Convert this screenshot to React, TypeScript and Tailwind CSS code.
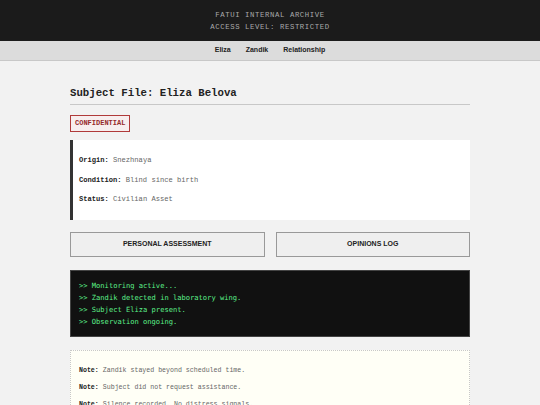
const mono = "font-['Liberation_Mono','Courier_New',monospace]"

function InfoRow({ label, value }: { label: string; value: string }) {
  return (
    <p className="leading-[10px]">
      <span className="font-bold text-[#222]">{label}:</span>{' '}
      <span className="text-[#666]">{value}</span>
    </p>
  )
}

export default function App() {
  const log = [
    '>> Monitoring active...',
    '>> Zandik detected in laboratory wing.',
    '>> Subject Eliza present.',
    '>> Observation ongoing.',
  ]
  const notes = [
    'Zandik stayed beyond scheduled time.',
    'Subject did not request assistance.',
    'Silence recorded. No distress signals.',
  ]

  return (
    <div className="h-[405px] overflow-hidden bg-[#f2f2f2]">
      <header className={`h-[41px] bg-[#1b1b1b] pt-[9px] text-center text-[7.3px] leading-[12px] tracking-[0.6px] text-[#aaa] ${mono}`}>
        <div>FATUI INTERNAL ARCHIVE</div>
        <div>ACCESS LEVEL: RESTRICTED</div>
      </header>

      <nav className="flex h-[20px] items-center justify-center gap-[15px] border-b border-[#c8c8c8] bg-[#dcdcdc] font-['Liberation_Sans',Arial,sans-serif] text-[7px] font-bold text-[#222]">
        <span>Eliza</span>
        <span>Zandik</span>
        <span>Relationship</span>
      </nav>

      <main className={`mx-auto w-[400px] pt-[25px] ${mono}`}>
        <h1 className="border-b border-[#c8c8c8] pb-[4px] text-[10.7px] font-bold leading-[14px] text-[#222]">
          Subject File: Eliza Belova
        </h1>

        <div className="mt-[10px] flex h-[17px] w-fit items-center border-[1.5px] border-[#b03a3a] bg-[#f7eeee] px-[4px] text-[7px] font-bold text-[#962a2a]">
          CONFIDENTIAL
        </div>

        <section className="mt-[8px] flex h-[80px] flex-col gap-[9.5px] border-l-[3px] border-[#333] bg-white pl-[6px] pt-[15px] text-[7.1px]">
          <InfoRow label="Origin" value="Snezhnaya" />
          <InfoRow label="Condition" value="Blind since birth" />
          <InfoRow label="Status" value="Civilian Asset" />
        </section>

        <div className="mt-[12px] grid grid-cols-2 gap-[11px] font-['Liberation_Sans',Arial,sans-serif] text-[7px] font-bold text-[#222]">
          <button className="h-[25px] border border-[#999] bg-[#efefef]">PERSONAL ASSESSMENT</button>
          <button className="h-[25px] border border-[#999] bg-[#efefef]">OPINIONS LOG</button>
        </div>

        <section className="mt-[13px] h-[67px] border border-[#444] bg-[#111] px-[8px] pt-[9px] font-['DejaVu_Sans_Mono',monospace] text-[7.1px] leading-[12px] text-[#5cf08a]">
          {log.map((l) => (
            <div key={l}>{l}</div>
          ))}
        </section>

        <section className="mt-[13px] flex flex-col gap-[7px] border border-dotted border-[#c8c8c8] bg-[#fffff6] pl-[8px] pt-[15px] text-[6.6px]">
          {notes.map((n) => (
            <p key={n} className="leading-[10px]">
              <span className="font-bold text-[#222]">Note:</span>{' '}
              <span className="text-[#666]">{n}</span>
            </p>
          ))}
        </section>
      </main>
    </div>
  )
}
